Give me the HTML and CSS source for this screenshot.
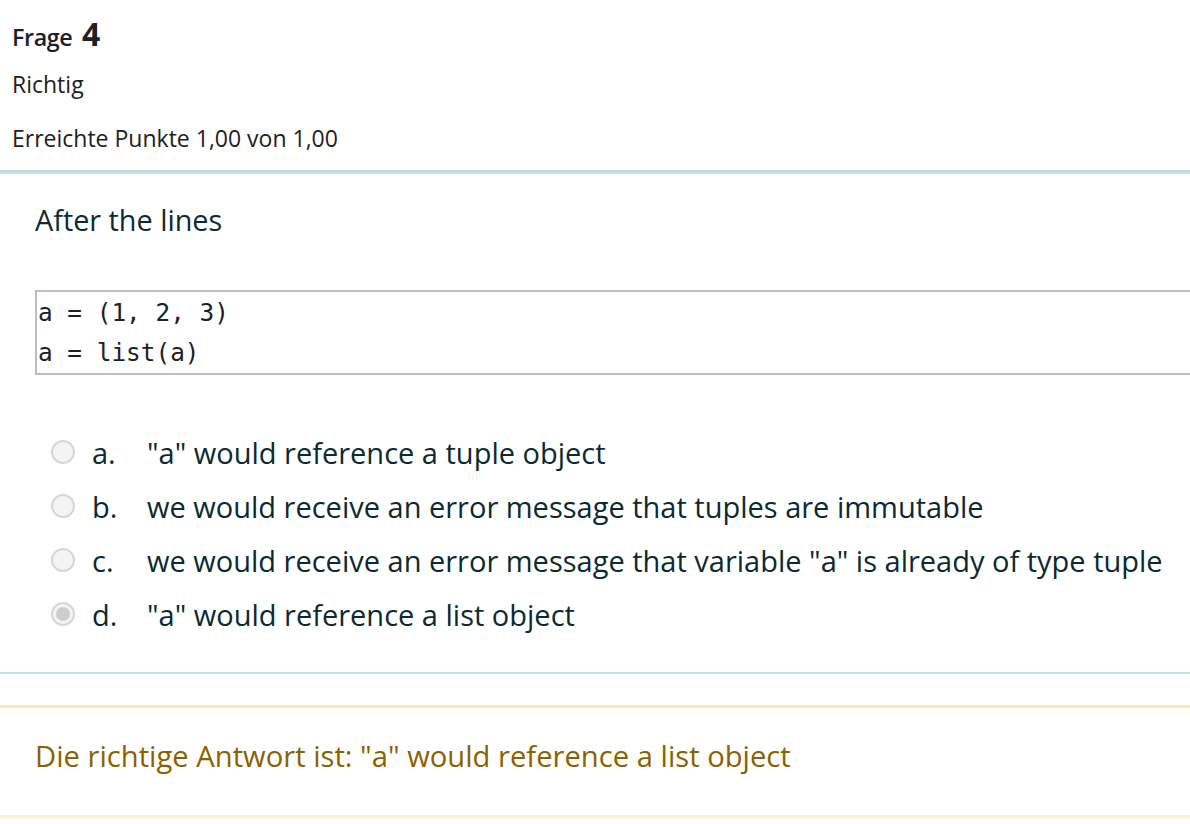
FILE: index.html
```html
<!DOCTYPE html>
<html lang="de">
<head>
<meta charset="utf-8">
<title>Frage 4</title>
<link rel="stylesheet" href="styles.css">
</head>
<body>
<div class="que">
  <div class="info">
    <h3 class="qno">Frage <span class="num">4</span></h3>
    <div class="state">Richtig</div>
    <div class="grade">Erreichte Punkte 1,00 von 1,00</div>
  </div>
  <div class="formulation">
    <p class="qtext">After the lines</p>
    <pre class="code">a = (1, 2, 3)
a = list(a)</pre>
    <div class="answers">
      <div class="opt"><span class="radio"></span><span class="letter">a.</span><span class="txt">"a" would reference a tuple object</span></div>
      <div class="opt"><span class="radio"></span><span class="letter">b.</span><span class="txt">we would receive an error message that tuples are immutable</span></div>
      <div class="opt"><span class="radio"></span><span class="letter">c.</span><span class="txt">we would receive an error message that variable "a" is already of type tuple</span></div>
      <div class="opt"><span class="radio checked"></span><span class="letter">d.</span><span class="txt">"a" would reference a list object</span></div>
    </div>
  </div>
  <div class="feedback">
    <div class="rightanswer">Die richtige Antwort ist: "a" would reference a list object</div>
  </div>
</div>
</body>
</html>
```
FILE: styles.css
```css
html, body {
  margin: 0;
  padding: 0;
  background: #fff;
}
body {
  font-family: "Open Sans", "Noto Sans", sans-serif;
  color: #1d2125;
  overflow: hidden;
  width: 1190px;
  height: 824px;
}
.que {
  width: 1190px;
}
.info {
  padding: 14px 0 0 12px;
  height: 157px;
  box-sizing: border-box;
}
.qno {
  margin: 0;
  font-size: 23.3px;
  font-weight: 600;
  line-height: 40px;
  letter-spacing: -0.4px;
}
.qno .num {
  font-size: 32px;
  font-weight: 700;
  margin-left: 4px;
}
.state {
  font-size: 23px;
  line-height: 30px;
  margin-top: 12px;
}
.grade {
  font-size: 23px;
  line-height: 30px;
  margin-top: 24px;
}
.formulation {
  border-top: 2px solid #c8d6dc;
  border-bottom: 2px solid #c0e0e8;
  box-shadow: inset 0 2px 0 #bfe3ea;
  padding: 28px 0 0 35px;
  height: 504px;
  box-sizing: border-box;
  margin-top: 13px;
  color: #0c2a30;
}
.qtext {
  margin: 0;
  font-size: 28.8px;
  line-height: 40px;
}
.code {
  margin: 50px 0 0 0;
  border: 2px solid #b7bec5;
  border-right: none;
  padding: 1px 0 0 1px;
  font-family: "DejaVu Sans Mono", "Liberation Mono", monospace;
  font-size: 24.4px;
  line-height: 40px;
  color: #1d2125;
}
.answers {
  margin-top: 50px;
  margin-left: 16px;
}
.opt {
  display: flex;
  align-items: center;
  height: 54px;
  font-size: 29px;
}
.radio {
  width: 24px;
  height: 24px;
  border: 2px solid #d6d6d6;
  border-radius: 50%;
  background: #f4f4f4;
  box-sizing: border-box;
  position: relative;
  flex: none;
}
.radio.checked::after {
  content: "";
  position: absolute;
  left: 3px;
  top: 3px;
  width: 14px;
  height: 14px;
  border-radius: 50%;
  background: #cdcdcd;
}
.letter {
  margin-left: 17px;
  width: 55px;
}
.txt {
  white-space: nowrap;
}
.feedback {
  margin-top: 31px;
  border-top: 3px solid #fde9b0;
  border-bottom: 3px solid #fdefc8;
  height: 113px;
  box-sizing: border-box;
  padding: 29px 0 0 35px;
}
.rightanswer {
  color: #8a6200;
  font-size: 29.2px;
  line-height: 38px;
}
```
